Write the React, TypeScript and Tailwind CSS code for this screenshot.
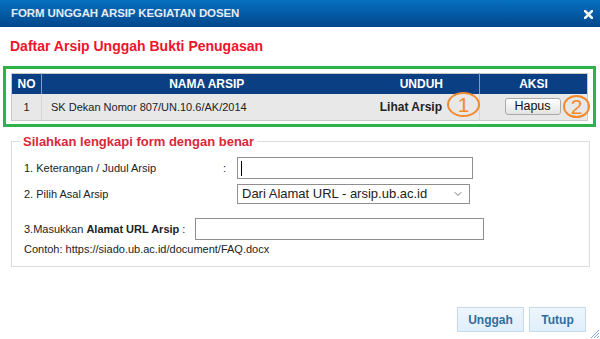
import { ChevronDown } from 'lucide-react';

export default function App() {
  return (
    <div className="relative h-[339px] w-[600px] overflow-hidden bg-white font-['Liberation_Sans',Arial,sans-serif] text-[#222]">
      <div className="flex h-[27px] items-center justify-between bg-gradient-to-b from-[#0670bf] to-[#03478c] pl-[11px] pr-[7px]">
        <span className="text-[11.5px] font-bold tracking-[-0.1px] text-[#e4ecf5]">FORM UNGGAH ARSIP KEGIATAN DOSEN</span>
        <svg width="9" height="9" viewBox="0 0 9 9" className="mt-[1px]">
          <path d="M1 1 L8 8 M8 1 L1 8" stroke="#eef3f9" strokeWidth="2.6" strokeLinecap="square" />
        </svg>
      </div>

      <h1 className="mt-[11px] pl-[10px] text-[14px] font-bold leading-[16px] text-[#f0132b]">Daftar Arsip Unggah Bukti Penugasan</h1>

      <div className="relative mx-[3px] mt-[12px] h-[61px] w-[593px] border-[3px] border-[#2eb34a] px-[5px] pt-[4px]">
        <table className="w-[577px] border-collapse border border-[#c8c8c8] text-[11px]">
          <thead>
            <tr className="h-[20px] bg-[#0b3f84] text-[12px] text-white">
              <th className="w-[30px] border-r border-[#7f9dc6] font-bold">NO</th>
              <th className="w-[330px] font-bold">NAMA ARSIP</th>
              <th className="w-[108px] border-r border-[#7f9dc6] pr-[36px] text-right font-bold">UNDUH</th>
              <th className="font-bold">AKSI</th>
            </tr>
          </thead>
          <tbody>
            <tr className="h-[27px] bg-[#e8e8e8]">
              <td className="border-r border-[#d6d6d6] text-center">1</td>
              <td className="pl-[9px]">SK Dekan Nomor 807/UN.10.6/AK/2014</td>
              <td className="border-r border-[#d6d6d6] pr-[37px] text-right text-[12px] font-bold">Lihat Arsip</td>
              <td className="text-center">
                <button className="ml-[-2px] h-[17px] w-[56px] rounded-[3px] border border-[#a9a9a9] bg-gradient-to-b from-white to-[#e3e3e3] text-[12.5px] leading-[15px] text-[#111]">Hapus</button>
              </td>
            </tr>
          </tbody>
        </table>
        <div className="absolute left-[441px] top-[23px] flex h-[25px] w-[33px] items-center justify-center rounded-[50%] border-2 border-[#f4892c] text-[21px] leading-none text-[#f4892c]">1</div>
        <div className="absolute left-[557px] top-[26px] flex h-[23px] w-[27px] items-center justify-center rounded-[50%] border-2 border-[#f4892c] text-[21px] leading-none text-[#f4892c]">2</div>
      </div>

      <fieldset className="mx-[11px] mt-[7px] h-[133px] w-[579px] border border-[#dcdcdc] pl-[12px] text-[11px]">
        <legend className="ml-[-4px] px-[3px] text-[13px] font-bold leading-[15px] text-[#d9283a]">Silahkan lengkapi form dengan benar</legend>
        <div className="mt-[8px] flex h-[22px] items-center">
          <span className="w-[199px]">1. Keterangan / Judul Arsip</span>
          <span className="w-[14px]">:</span>
          <div className="flex h-[22px] w-[236px] items-center border border-[#8f8f8f] bg-white pl-[3px]">
            <span className="h-[15px] w-px bg-black" />
          </div>
        </div>
        <div className="mt-[5px] flex h-[20px] items-center">
          <span className="w-[213px]">2. Pilih Asal Arsip</span>
          <div className="flex h-[20px] w-[233px] items-center justify-between border border-[#8f8f8f] bg-white pl-[4px] pr-[5px] text-[13px]">
            <span>Dari Alamat URL - arsip.ub.ac.id</span>
            <ChevronDown size={12} strokeWidth={1.5} color="#444" />
          </div>
        </div>
        <div className="mt-[14px] flex h-[22px] items-center">
          <span className="w-[171px]">3.Masukkan <b>Alamat URL Arsip</b> :</span>
          <div className="h-[22px] w-[289px] border border-[#8f8f8f] bg-white" />
        </div>
        <div className="mt-[2px] leading-[14px]">Contoh: https://siado.ub.ac.id/document/FAQ.docx</div>
      </fieldset>

      <div className="mt-[40px] flex justify-end gap-[5px] pr-[14px]">
        <button className="h-[25px] w-[67px] border border-[#c5dbec] bg-gradient-to-b from-[#eef5fc] to-[#dfeffc] text-[12px] font-bold text-[#2e6e9e]">Unggah</button>
        <button className="h-[25px] w-[57px] border border-[#c5dbec] bg-gradient-to-b from-[#eef5fc] to-[#dfeffc] text-[12px] font-bold text-[#2e6e9e]">Tutup</button>
      </div>

      <svg width="10" height="10" viewBox="0 0 10 10" className="absolute bottom-0 right-0">
        <path d="M9 1 L1 9 M9 4 L4 9 M9 7 L7 9" stroke="#7fa6cf" strokeWidth="1" />
      </svg>
    </div>
  );
}
